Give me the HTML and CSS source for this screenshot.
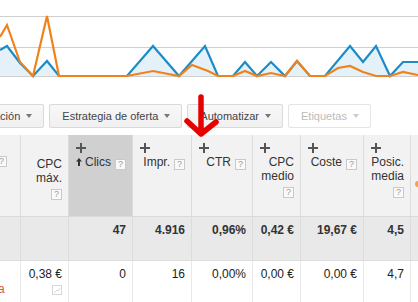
FILE: index.html
```html
<!DOCTYPE html>
<html lang="es">
<head>
    <meta charset="UTF-8">
    <meta name="viewport" content="width=device-width, initial-scale=1.0">
    <title>Campañas</title>
    <link rel="stylesheet" href="styles.css">
</head>
<body>
    <!-- performance chart: clicks (blue) and cost (orange) -->
    <svg class="chart" width="418" height="82" viewBox="0 0 418 82">
        <line class="grid-line" x1="0" y1="16.5" x2="418" y2="16.5"/>
        <line class="grid-line" x1="0" y1="47.5" x2="418" y2="47.5"/>
        <line class="grid-line" x1="0" y1="76.5" x2="418" y2="76.5"/>
        <polygon class="area" points="0,76 0,50 7,46 20,63 33,76 47,61 59,76 127,76 153,46 179,76 205,46 218,76 233,76 245,62 257,76 271,62 285,76 297,61 310,76 325,76 350,46 363,62 376,46 390,76 403,62 418,62 418,76"/>
        <polyline class="clicks" points="0,50 7,46 20,63 33,76 47,61 59,76 127,76 153,46 179,76 205,46 218,76 233,76 245,62 257,76 271,62 285,76 297,61 310,76 325,76 350,46 363,62 376,46 390,76 403,62 418,62"/>
        <polyline class="cost" points="0,37 7,25 20,62 33,76 47,16 59,76 127,76 153,71 179,76 192,65 208,71 218,76 233,76 245,71 257,76 271,73 285,76 297,61 310,76 325,76 338,68 350,66 363,72 376,76 390,76 403,72 418,75"/>
    </svg>

    <div class="toolbar">
        <button class="btn btn-cut">ación<span class="caret"></span></button>
        <button class="btn">Estrategia de oferta<span class="caret"></span></button>
        <button class="btn">Automatizar<span class="caret"></span></button>
        <button class="btn btn-disabled">Etiquetas<span class="caret"></span></button>
    </div>

    <div class="grid">
        <!-- header -->
        <div class="th th-first"><span class="help help-cut">?</span></div>
        <div class="th th-noadd">
            <div class="label">CPC<br>máx.<br><span class="help">?</span></div>
        </div>
        <div class="th th-sorted">
            <svg class="add" width="10" height="10" viewBox="0 0 10 10"><path d="M5 0V10M0 5H10"/></svg>
            <div class="label"><svg class="sort-up" width="6" height="8" viewBox="0 0 6 8"><path d="M3 0L6 3.5H4V8H2V3.5H0Z"/></svg>Clics<span class="help">?</span></div>
        </div>
        <div class="th">
            <svg class="add" width="10" height="10" viewBox="0 0 10 10"><path d="M5 0V10M0 5H10"/></svg>
            <div class="label">Impr.<span class="help">?</span></div>
        </div>
        <div class="th">
            <svg class="add" width="10" height="10" viewBox="0 0 10 10"><path d="M5 0V10M0 5H10"/></svg>
            <div class="label">CTR<span class="help">?</span></div>
        </div>
        <div class="th">
            <svg class="add" width="10" height="10" viewBox="0 0 10 10"><path d="M5 0V10M0 5H10"/></svg>
            <div class="label">CPC<br>medio<br><span class="help">?</span></div>
        </div>
        <div class="th">
            <svg class="add" width="10" height="10" viewBox="0 0 10 10"><path d="M5 0V10M0 5H10"/></svg>
            <div class="label">Coste<span class="help">?</span></div>
        </div>
        <div class="th">
            <svg class="add" width="10" height="10" viewBox="0 0 10 10"><path d="M5 0V10M0 5H10"/></svg>
            <div class="label">Posic.<br>media<br><span class="help">?</span></div>
        </div>
        <div class="th th-last"><span class="dot"></span></div>

        <!-- totals -->
        <div class="total"></div>
        <div class="total"></div>
        <div class="total">47</div>
        <div class="total">4.916</div>
        <div class="total">0,96%</div>
        <div class="total">0,42 €</div>
        <div class="total">19,67 €</div>
        <div class="total">4,5</div>
        <div class="total"></div>

        <!-- keyword row -->
        <div class="cell cell-first"><span class="status">a</span></div>
        <div class="cell">0,38 €
            <svg class="sim" width="10" height="10" viewBox="0 0 10 10"><rect x="0.5" y="0.5" width="9" height="9"/><path d="M2 8L5 5L6 6L8 3"/></svg>
        </div>
        <div class="cell">0</div>
        <div class="cell">16</div>
        <div class="cell">0,00%</div>
        <div class="cell">0,00 €</div>
        <div class="cell">0,00 €</div>
        <div class="cell">4,7</div>
        <div class="cell"></div>
    </div>

    <svg class="arrow" width="40" height="48" viewBox="0 0 40 48">
        <path d="M19 6V40M5 30L19 43L34 31"/>
    </svg>
</body>
</html>
```

FILE: styles.css
```css
html, body {
    margin: 0;
}

body {
    position: relative;
    width: 418px;
    height: 302px;
    overflow: hidden;
    background: #fff;
    font-family: "Liberation Sans", Arial, sans-serif;
    font-size: 12px;
    color: #333;
}

/* chart */
.chart {
    display: block;
}
.chart .grid-line {
    stroke: #cfcfcf;
    stroke-width: 1;
}
.chart .area {
    fill: #e5f1f8;
}
.chart .clicks {
    fill: none;
    stroke: #1c8cc6;
    stroke-width: 2.2;
}
.chart .cost {
    fill: none;
    stroke: #f0821c;
    stroke-width: 2.2;
}

/* toolbar */
.toolbar {
    display: flex;
    gap: 5px;
    padding: 22px 0 7px;
}
.btn {
    flex: none;
    display: inline-flex;
    align-items: center;
    gap: 6px;
    box-sizing: border-box;
    height: 24px;
    padding: 0 11px 0 12px;
    border: 1px solid #d9d9d9;
    border-radius: 2px;
    background: linear-gradient(#f8f8f8, #f0f0f0);
    font-family: "Liberation Sans", Arial, sans-serif;
    font-size: 11px;
    color: #444;
}
.btn-cut {
    margin-left: -19px;
}
.btn-disabled {
    background: #fff;
    border-color: #e4e4e4;
    color: #bbb;
}
.caret {
    width: 0;
    height: 0;
    border-left: 3.5px solid transparent;
    border-right: 3.5px solid transparent;
    border-top: 4px solid #777;
}
.btn-disabled .caret {
    border-top-color: #ccc;
}

/* table */
.grid {
    display: grid;
    grid-template-columns: 21px 48px 64px 59px 61px 48px 63px 47px 40px;
}
.th, .total, .cell {
    box-sizing: border-box;
    border-right: 1px solid #dcdcdc;
    text-align: right;
}
.th {
    height: 82px;
    padding: 8px 6px 0 7px;
    background: #f2f2f2;
    border-bottom: 1px solid #dadada;
}
.th-sorted {
    background: #d0d0d0;
}
.th-noadd {
    padding-top: 20px;
}
.th-first {
    padding: 21px 0 0;
    text-align: left;
}
.th-last {
    padding: 46px 0 0 4px;
    text-align: left;
}
.add {
    display: block;
    stroke: #555;
    stroke-width: 2;
}
.label {
    margin-top: 2px;
    line-height: 14px;
}
.sort-up {
    margin-right: 3px;
    fill: #333;
}
.help {
    display: inline-block;
    box-sizing: border-box;
    width: 11px;
    height: 11px;
    margin-left: 4px;
    border: 1px solid #c9c9c9;
    background: #fafafa;
    font-size: 9px;
    line-height: 9px;
    text-align: center;
    color: #999;
    vertical-align: -1px;
}
.label br + .help {
    margin-left: 0;
}
.help-cut {
    display: block;
    margin-left: -4px;
}
.dot {
    display: block;
    width: 6px;
    height: 6px;
    border-radius: 50%;
    background: #f0a050;
}

.total {
    height: 44px;
    padding: 6px 6px 0;
    line-height: 15px;
    background: #e9e9e9;
    border-bottom: 1px solid #dddddd;
    font-weight: bold;
}

.cell {
    height: 50px;
    padding: 6px 6px 0;
    line-height: 15px;
    border-right-color: #e8e8e8;
    color: #222;
}
.cell-first {
    padding: 21px 0 0;
    text-align: left;
}
.status {
    display: block;
    margin-left: -2px;
    color: #e0582c;
}
.sim {
    display: block;
    margin: 3px 0 0 auto;
    fill: none;
    stroke: #d8d8d8;
}

/* red pointer drawn over toolbar and header */
.arrow {
    position: absolute;
    left: 182px;
    top: 91px;
}
.arrow path {
    fill: none;
    stroke: #e60000;
    stroke-width: 5.5;
    stroke-linecap: round;
    stroke-linejoin: round;
}
```
